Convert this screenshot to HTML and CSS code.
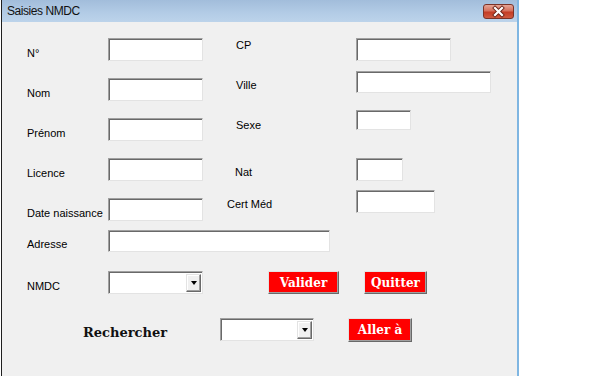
FILE: index.html
```html
<!DOCTYPE html>
<html lang="fr">
<head>
  <meta charset="UTF-8">
  <meta name="viewport" content="width=device-width, initial-scale=1.0">
  <title>Saisies NMDC</title>
  <link rel="stylesheet" href="styles.css">
</head>
<body>
  <div class="window">
    <div class="titlebar">
      <span class="title">Saisies NMDC</span>
      <button class="close" type="button">
        <svg width="29" height="13" viewBox="0 0 29 13">
          <path d="M11 3 L18 10 M18 3 L11 10" stroke="#6b2318" stroke-width="4" stroke-linecap="square"/>
          <path d="M11 3 L18 10 M18 3 L11 10" stroke="#fff" stroke-width="2.2" stroke-linecap="square"/>
        </svg>
      </button>
    </div>

    <div class="form">
      <div class="fields">
        <!-- left column -->
        <div class="col col-left">
          <div class="row"><label class="lbl">N°</label><input class="txt" type="text"></div>
          <div class="row"><label class="lbl">Nom</label><input class="txt" type="text"></div>
          <div class="row"><label class="lbl">Prénom</label><input class="txt" type="text"></div>
          <div class="row"><label class="lbl">Licence</label><input class="txt" type="text"></div>
          <div class="row"><label class="lbl">Date naissance</label><input class="txt" type="text"></div>
        </div>

        <!-- right column -->
        <div class="col col-right">
          <div class="row"><label class="lbl lbl-r lbl-top">CP</label><input class="txt" type="text"></div>
          <div class="row row-ville"><label class="lbl lbl-r">Ville</label><input class="txt w-ville h22" type="text"></div>
          <div class="row row-sexe"><label class="lbl lbl-r lbl-sexe">Sexe</label><input class="txt w-sexe h20" type="text"></div>
          <div class="row row-nat"><label class="lbl lbl-r lbl-nat">Nat</label><input class="txt w-nat" type="text"></div>
          <div class="row row-cert"><label class="lbl lbl-r lbl-cert">Cert Méd</label><input class="txt w-cert" type="text"></div>
        </div>
      </div>

      <div class="row row-adresse">
        <label class="lbl">Adresse</label><input class="txt w-adresse h22" type="text">
      </div>

      <div class="row row-nmdc">
        <label class="lbl">NMDC</label>
        <div class="combo h22"><span class="combo-btn"><span class="arrow"></span></span></div>
        <button class="btn btn-valider" type="button">Valider</button>
        <button class="btn btn-quitter" type="button">Quitter</button>
      </div>

      <div class="row row-search">
        <span class="search-lbl">Rechercher</span>
        <div class="combo w-search"><span class="combo-btn"><span class="arrow"></span></span></div>
        <button class="btn btn-aller" type="button">Aller à</button>
      </div>
    </div>
  </div>
</body>
</html>
```

FILE: styles.css
```css
* {
  box-sizing: border-box;
}

body {
  margin: 0;
  background: #fff;
  font-family: "Liberation Sans", Arial, sans-serif;
  font-size: 11px;
  color: #000;
}

.window {
  margin-left: 1px;
  width: 518px;
  height: 376px;
  border-left: 1px solid #1f1f1f;
  border-right: 2px solid #7fb6e2;
  display: flex;
  flex-direction: column;
}

.titlebar {
  height: 22px;
  background: linear-gradient(#a2bddb, #b3cce6 60%, #bcd3ea);
  display: flex;
  align-items: center;
  justify-content: space-between;
  padding: 0 3px 0 5px;
}

.title {
  font-size: 12px;
  letter-spacing: -0.45px;
  color: #111;
}

.close {
  width: 31px;
  height: 15px;
  padding: 0;
  border: 1px solid #7b3328;
  border-radius: 3px;
  background: linear-gradient(#e6a596, #d5705c 45%, #c43c25 55%, #cf5a40);
  display: flex;
  align-items: center;
  justify-content: center;
}

.form {
  flex: 1;
  background: #f0f0f0;
  padding: 16px 0 0 25px;
}

.fields {
  display: flex;
  gap: 24px;
}

.col {
  display: flex;
  flex-direction: column;
}

.col-left {
  gap: 17px;
}

.row {
  display: flex;
}

.lbl {
  width: 81px;
  line-height: 13px;
  align-self: flex-end;
  margin-bottom: 1px;
  white-space: nowrap;
}

.lbl-r {
  width: 129px;
  padding-left: 9px;
}

.lbl-top {
  align-self: flex-start;
  margin-top: 1px;
}

.lbl-sexe {
  margin-bottom: -2px;
}

.lbl-nat {
  padding-left: 8px;
  margin-bottom: 2px;
}

.lbl-cert {
  padding-left: 0;
  margin-bottom: 2px;
}

.txt {
  width: 95px;
  height: 23px;
  margin: 0;
  padding: 0 3px;
  background: #fff;
  border: 1px solid;
  border-color: #a0a0a0 #e3e3e3 #e3e3e3 #a0a0a0;
  box-shadow: inset 1px 1px 0 #696969;
  font: inherit;
  outline: none;
}

.h22 { height: 22px; }
.h20 { height: 20px; }

.w-ville { width: 135px; }
.w-sexe { width: 55px; }
.w-nat { width: 47px; }
.w-cert { width: 79px; }
.w-adresse { width: 222px; }

.row-ville { margin-top: 10px; }
.row-sexe { margin-top: 17px; }
.row-nat { margin-top: 28px; }
.row-cert { margin-top: 9px; }

.row-adresse { margin-top: 9px; }

.row-nmdc {
  margin-top: 19px;
  align-items: flex-start;
}

.combo {
  width: 95px;
  height: 23px;
  background: #fff;
  border: 1px solid;
  border-color: #a0a0a0 #e3e3e3 #e3e3e3 #a0a0a0;
  box-shadow: inset 1px 1px 0 #696969;
  display: flex;
  justify-content: flex-end;
  padding: 2px 1px 1px 2px;
}

.combo-btn {
  width: 15px;
  background: #f0f0f0;
  border: 1px solid;
  border-color: #e3e3e3 #696969 #696969 #e3e3e3;
  box-shadow: inset -1px -1px 0 #a0a0a0, inset 1px 1px 0 #fff;
  display: flex;
  align-items: center;
  justify-content: center;
}

.arrow {
  width: 0;
  height: 0;
  border-left: 3.5px solid transparent;
  border-right: 3.5px solid transparent;
  border-top: 4px solid #000;
}

.btn {
  height: 23px;
  padding: 0;
  background: #ff0000;
  color: #fff;
  border: 1px solid;
  border-color: #e3e3e3 #696969 #696969 #e3e3e3;
  box-shadow: inset -1px -1px 0 #a0a0a0;
  font-family: "DejaVu Serif", "Liberation Serif", serif;
  font-weight: bold;
  font-size: 12px;
}

.btn-valider {
  width: 71px;
  margin-left: 65px;
}

.btn-quitter {
  width: 63px;
  margin-left: 25px;
}

.row-search {
  margin-top: 24px;
  align-items: flex-start;
}

.search-lbl {
  width: 137px;
  margin-left: 56px;
  align-self: flex-end;
  margin-bottom: 1px;
  line-height: 16px;
  font-family: "DejaVu Serif", "Liberation Serif", serif;
  font-weight: bold;
  font-size: 13px;
  color: #111;
}

.w-search { width: 94px; }

.btn-aller {
  width: 64px;
  height: 24px;
  margin-left: 34px;
}
```
